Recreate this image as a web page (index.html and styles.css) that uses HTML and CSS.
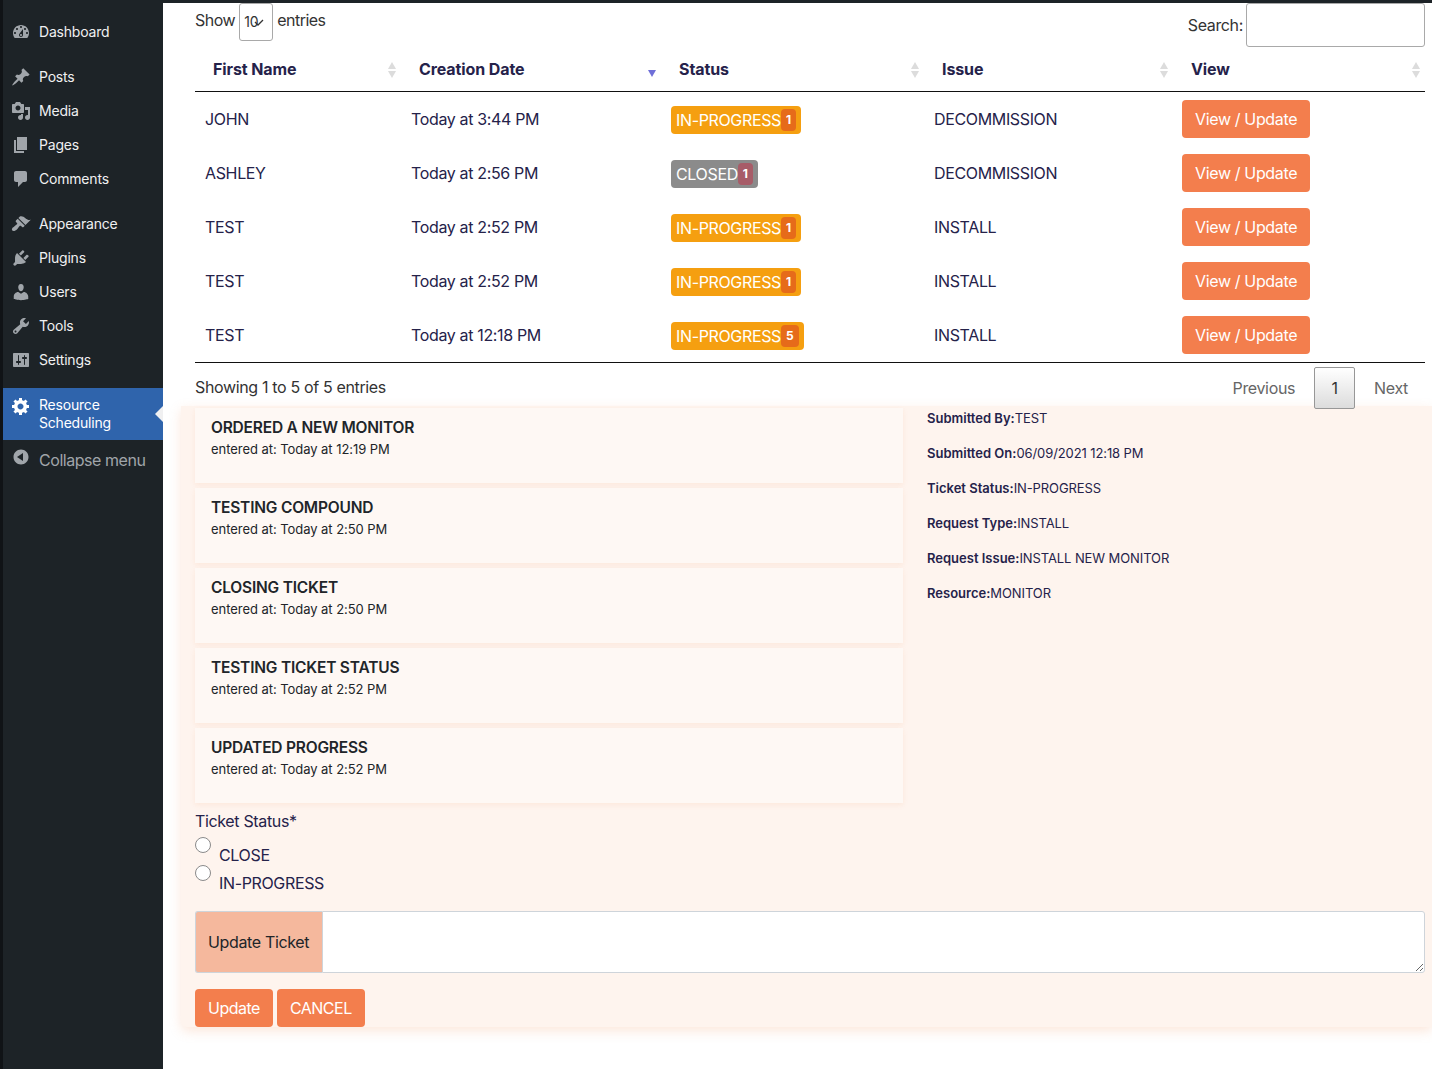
FILE: index.html
```html
<!DOCTYPE html>
<html>
<head>
    <title>Resource Scheduling</title>
    <link rel="stylesheet" href="styles.css">
</head>
<body>
    <aside class="sidebar">
        <ul class="menu">
            <li class="menu-item"><svg class="menu-icon" viewBox="0 0 20 20"><path fill-rule="evenodd" d="M3.76 16h12.48c1.1-1.37 1.76-3.11 1.76-5 0-4.42-3.58-8-8-8s-8 3.58-8 8c0 1.89.66 3.63 1.76 5zM10 4c.55 0 1 .45 1 1s-.45 1-1 1-1-.45-1-1 .45-1 1-1zM6 6c.55 0 1 .45 1 1s-.45 1-1 1-1-.45-1-1 .45-1 1-1zm8 0c.55 0 1 .45 1 1s-.45 1-1 1-1-.45-1-1 .45-1 1-1zm-5.37 5.55L12 7v6c0 1.1-.9 2-2 2s-2-.9-2-2c0-.57.24-1.08.63-1.45zM4 10c.55 0 1 .45 1 1s-.45 1-1 1-1-.45-1-1 .45-1 1-1zm12 0c.55 0 1 .45 1 1s-.45 1-1 1-1-.45-1-1 .45-1 1-1zm-5 3c0-.55-.45-1-1-1s-1 .45-1 1 .45 1 1 1 1-.45 1-1z"/></svg>Dashboard</li>
            <li class="menu-item menu-gap"><svg class="menu-icon" viewBox="0 0 20 20"><path d="M10.44 3.02l1.82-1.82 6.36 6.35-1.83 1.82c-1.05-.68-2.48-.57-3.41.36l-.75.75c-.92.93-1.04 2.35-.35 3.41l-1.83 1.82-2.41-2.41-2.8 2.79c-.42.42-3.38 2.71-3.8 2.29s1.86-3.39 2.28-3.81l2.79-2.79L4.1 9.36l1.83-1.82c1.05.69 2.48.57 3.4-.36l.75-.75c.93-.92 1.05-2.35.36-3.41z"/></svg>Posts</li>
            <li class="menu-item"><svg class="menu-icon" viewBox="0 0 20 20"><path fill-rule="evenodd" d="M13 11V4c0-.55-.45-1-1-1h-1.67L9 1H5L3.67 3H2c-.55 0-1 .45-1 1v7c0 .55.45 1 1 1h10c.55 0 1-.45 1-1zM7 4.5c1.38 0 2.5 1.12 2.5 2.5S8.38 9.5 7 9.5 4.5 8.38 4.5 7 5.62 4.5 7 4.5zM14 6h5v10.5c0 1.38-1.12 2.5-2.5 2.5S14 17.88 14 16.5s1.12-2.5 2.5-2.5c.17 0 .34.02.5.05V9h-3V6zm-4 8.05V13h2v3.5c0 1.38-1.12 2.5-2.5 2.5S7 17.88 7 16.5 8.12 14 9.5 14c.17 0 .34.02.5.05z"/></svg>Media</li>
            <li class="menu-item"><svg class="menu-icon" viewBox="0 0 20 20"><path d="M6 15V2h10v13H6zm-1 1h8v2H3V5h2v11z"/></svg>Pages</li>
            <li class="menu-item"><svg class="menu-icon" viewBox="0 0 20 20"><path d="M5 2h9c1.1 0 2 .9 2 2v7c0 1.1-.9 2-2 2h-2l-5 5v-5H5c-1.1 0-2-.9-2-2V4c0-1.1.9-2 2-2z"/></svg>Comments</li>
            <li class="menu-item menu-gap"><svg class="menu-icon" viewBox="0 0 20 20"><path d="M14.48 11.06L7.41 3.99l1.5-1.5c.5-.56 2.3-.47 3.51.32 1.21.8 1.43 1.28 2.91 2.1 1.18.64 2.45 1.26 4.45.85zm-.71.71L6.7 4.7 4.93 6.47c-.39.39-.39 1.02 0 1.41l1.06 1.06c.39.39.39 1.03 0 1.42-.6.6-1.43 1.11-2.21 1.69-.35.26-.7.53-1.01.84C1.43 13.23.28 15.5 1.39 16.61s3.38-.04 4.72-1.38c.31-.31.58-.66.84-1.01.58-.78 1.09-1.61 1.69-2.21.39-.39 1.03-.39 1.42 0l1.06 1.06c.39.39 1.02.39 1.41 0z"/></svg>Appearance</li>
            <li class="menu-item"><svg class="menu-icon" viewBox="0 0 20 20"><path d="M13.11 4.36L9.87 7.6 8 5.73l3.24-3.24c.35-.34 1.05-.2 1.56.32.52.51.66 1.21.31 1.55zm-8 1.77l.91-1.12 9.01 9.01-1.19.84c-.71.71-2.63 1.16-3.82 1.16H6.14L4.9 17.26c-.59.59-1.54.59-2.12 0-.59-.58-.59-1.53 0-2.12l1.24-1.24v-3.88c0-1.13.4-3.19 1.09-3.89zm7.26 3.97l3.24-3.24c.34-.35 1.04-.21 1.55.31.52.51.66 1.21.31 1.55l-3.24 3.25z"/></svg>Plugins</li>
            <li class="menu-item"><svg class="menu-icon" viewBox="0 0 20 20"><path d="M10 9.25c-2.27 0-2.73-3.44-2.73-3.44C7 4.02 7.82 2 9.97 2c2.16 0 2.98 2.02 2.71 3.81 0 0-.41 3.44-2.68 3.44zm0 2.57L12.72 10c2.39 0 4.52 2.33 4.52 4.53v2.49s-3.65 1.13-7.24 1.13c-3.65 0-7.24-1.13-7.24-1.13v-2.49c0-2.25 1.94-4.48 4.47-4.48z"/></svg>Users</li>
            <li class="menu-item"><svg class="menu-icon" viewBox="0 0 20 20"><path fill-rule="evenodd" d="M16.68 9.77c-1.34 1.34-3.3 1.67-4.95.99l-5.41 6.52c-.99.99-2.59.99-3.58 0s-.99-2.59 0-3.57l6.52-5.42c-.68-1.65-.35-3.61.99-4.95 1.28-1.28 3.12-1.62 4.72-1.06l-2.89 2.89 2.82 2.82 2.86-2.87c.53 1.58.18 3.39-1.08 4.65zM3.81 16.21c.4.39 1.04.39 1.43 0 .4-.4.4-1.04 0-1.43-.39-.4-1.03-.4-1.43 0-.39.39-.39 1.03 0 1.43z"/></svg>Tools</li>
            <li class="menu-item"><svg class="menu-icon" viewBox="0 0 20 20"><path fill-rule="evenodd" d="M18 16V4c0-.55-.45-1-1-1H3c-.55 0-1 .45-1 1v12c0 .55.45 1 1 1h14c.55 0 1-.45 1-1zM8 11h1c.55 0 1 .45 1 1s-.45 1-1 1H8v1.5c0 .28-.22.5-.5.5s-.5-.22-.5-.5V13H6c-.55 0-1-.45-1-1s.45-1 1-1h1V5.5c0-.28.22-.5.5-.5s.5.22.5.5V11zm5-2h-1c-.55 0-1-.45-1-1s.45-1 1-1h1V5.5c0-.28.22-.5.5-.5s.5.22.5.5V7h1c.55 0 1 .45 1 1s-.45 1-1 1h-1v5.5c0 .28-.22.5-.5.5s-.5-.22-.5-.5V9z"/></svg>Settings</li>
            <li class="menu-item menu-gap menu-active"><svg class="menu-icon" viewBox="0 0 20 20"><path fill-rule="evenodd" d="M18 12h-2.18c-.17.7-.44 1.35-.81 1.93l1.54 1.54-2.1 2.1-1.54-1.54c-.58.36-1.23.63-1.91.79V19H8v-2.18c-.68-.16-1.33-.43-1.91-.79l-1.54 1.54-2.12-2.12 1.54-1.54c-.36-.58-.63-1.23-.79-1.91H1V9.03h2.17c.16-.7.44-1.35.8-1.94L2.43 5.55l2.1-2.1 1.54 1.54c.58-.37 1.24-.64 1.93-.81V2h3v2.18c.68.16 1.33.43 1.91.79l1.54-1.54 2.12 2.12-1.54 1.54c.36.59.64 1.24.8 1.94H18V12zm-8.5 1.5c1.66 0 3-1.34 3-3s-1.34-3-3-3-3 1.34-3 3 1.34 3 3 3z"/></svg>Resource<br>Scheduling</li>
            <li class="menu-item menu-collapse"><svg class="menu-icon" viewBox="0 0 20 20"><path fill-rule="evenodd" d="M10 2.5c-4.14 0-7.5 3.36-7.5 7.5s3.36 7.5 7.5 7.5 7.5-3.36 7.5-7.5-3.36-7.5-7.5-7.5zM12 14L6 10l6-4z"/></svg>Collapse menu</li>
        </ul>
    </aside>

    <main class="content">
        <div class="listing">
            <div class="toolbar">
                <div class="length">
                    <span>Show</span>
                    <span class="length-select">10<svg class="length-arrow" viewBox="0 0 10 8"><path d="M1 3l3 3 5-5" fill="none" stroke="#333" stroke-width="1.3"/></svg></span>
                    <span>entries</span>
                </div>
                <label class="search">Search:<input class="search-input" type="text"></label>
            </div>

            <table class="tickets">
                <thead>
                    <tr>
                        <th class="col-name sortable">First Name</th>
                        <th class="col-date sorted">Creation Date</th>
                        <th class="col-status sortable">Status</th>
                        <th class="col-issue sortable">Issue</th>
                        <th class="col-view sortable">View</th>
                    </tr>
                </thead>
                <tbody>
                    <tr>
                        <td>JOHN</td>
                        <td>Today at 3:44 PM</td>
                        <td><span class="badge badge-progress">IN-PROGRESS<span class="count">1</span></span></td>
                        <td>DECOMMISSION</td>
                        <td class="cell-view"><a class="btn">View / Update</a></td>
                    </tr>
                    <tr>
                        <td>ASHLEY</td>
                        <td>Today at 2:56 PM</td>
                        <td><span class="badge badge-closed">CLOSED<span class="count">1</span></span></td>
                        <td>DECOMMISSION</td>
                        <td class="cell-view"><a class="btn">View / Update</a></td>
                    </tr>
                    <tr>
                        <td>TEST</td>
                        <td>Today at 2:52 PM</td>
                        <td><span class="badge badge-progress">IN-PROGRESS<span class="count">1</span></span></td>
                        <td>INSTALL</td>
                        <td class="cell-view"><a class="btn">View / Update</a></td>
                    </tr>
                    <tr>
                        <td>TEST</td>
                        <td>Today at 2:52 PM</td>
                        <td><span class="badge badge-progress">IN-PROGRESS<span class="count">1</span></span></td>
                        <td>INSTALL</td>
                        <td class="cell-view"><a class="btn">View / Update</a></td>
                    </tr>
                    <tr>
                        <td>TEST</td>
                        <td>Today at 12:18 PM</td>
                        <td><span class="badge badge-progress">IN-PROGRESS<span class="count">5</span></span></td>
                        <td>INSTALL</td>
                        <td class="cell-view"><a class="btn">View / Update</a></td>
                    </tr>
                </tbody>
            </table>

            <div class="table-footer">
                <span class="table-info">Showing 1 to 5 of 5 entries</span>
                <div class="pagination">
                    <span class="page-link">Previous</span>
                    <span class="page-current">1</span>
                    <span class="page-link">Next</span>
                </div>
            </div>
        </div>

        <section class="ticket-panel">
            <div class="ticket-columns">
                <div class="updates">
                    <div class="update-card">
                        <h4 class="update-title">ORDERED A NEW MONITOR</h4>
                        <p class="update-time">entered at: Today at 12:19 PM</p>
                    </div>
                    <div class="update-card">
                        <h4 class="update-title">TESTING COMPOUND</h4>
                        <p class="update-time">entered at: Today at 2:50 PM</p>
                    </div>
                    <div class="update-card">
                        <h4 class="update-title">CLOSING TICKET</h4>
                        <p class="update-time">entered at: Today at 2:50 PM</p>
                    </div>
                    <div class="update-card">
                        <h4 class="update-title">TESTING TICKET STATUS</h4>
                        <p class="update-time">entered at: Today at 2:52 PM</p>
                    </div>
                    <div class="update-card">
                        <h4 class="update-title">UPDATED PROGRESS</h4>
                        <p class="update-time">entered at: Today at 2:52 PM</p>
                    </div>
                </div>
                <div class="details">
                    <p><b>Submitted By:</b>TEST</p>
                    <p><b>Submitted On:</b>06/09/2021 12:18 PM</p>
                    <p><b>Ticket Status:</b>IN-PROGRESS</p>
                    <p><b>Request Type:</b>INSTALL</p>
                    <p><b>Request Issue:</b>INSTALL NEW MONITOR</p>
                    <p><b>Resource:</b>MONITOR</p>
                </div>
            </div>

            <form class="ticket-form">
                <div class="status-label">Ticket Status*</div>
                <label class="radio-row"><input class="radio" type="radio" name="status"><span class="radio-text">CLOSE</span></label>
                <label class="radio-row"><input class="radio" type="radio" name="status"><span class="radio-text">IN-PROGRESS</span></label>

                <div class="input-group">
                    <span class="input-addon">Update Ticket</span>
                    <textarea class="input-text"></textarea>
                </div>

                <div class="form-actions">
                    <a class="btn">Update</a>
                    <a class="btn">CANCEL</a>
                </div>
            </form>
        </section>
    </main>
</body>
</html>
```

FILE: styles.css
```css
html, body {
    height: 100%;
}
body {
    margin: 0;
    display: flex;
    overflow: hidden;
    background-color: #1d2327;
    color: #25224a;
    font-family: Inter, "Liberation Sans", sans-serif;
    font-size: 16px;
    line-height: 24px;
    letter-spacing: -0.35px;
}

/* sidebar */
.sidebar {
    flex: 0 0 160px;
    border-left: 3px solid #101316;
    background-color: #1d2327;
}
.menu {
    list-style: none;
    margin: 0;
    padding: 15px 0 0;
}
.menu-item {
    position: relative;
    height: 34px;
    padding-left: 36px;
    color: #f0f0f1;
    font-size: 14px;
    line-height: 34px;
    letter-spacing: -0.2px;
}
.menu-gap {
    margin-top: 11px;
}
.menu-icon {
    position: absolute;
    left: 8px;
    top: 7px;
    width: 20px;
    height: 20px;
    fill: #a0a5aa;
}
.menu-active {
    height: 52px;
    padding-top: 8px;
    box-sizing: border-box;
    background-color: #2f64ac;
    color: #fff;
    line-height: 18px;
}
.menu-active .menu-icon {
    top: 8px;
    fill: #fff;
}
.menu-active::after {
    content: "";
    position: absolute;
    right: 0;
    top: 18px;
    border: 8px solid transparent;
    border-right-color: #f0f0f1;
    border-left-width: 0;
}
.menu-collapse {
    height: 40px;
    color: #a0a5aa;
    font-size: 16px;
    line-height: 40px;
    letter-spacing: -0.45px;
}
.menu-collapse .menu-icon {
    top: 7px;
}

/* top listing */
.content {
    flex: 1;
    margin-top: 3px;
    min-width: 0;
    background-color: #fff;
}
.listing {
    padding: 0 7px 0 32px;
}
.toolbar {
    display: flex;
    justify-content: space-between;
    height: 44px;
    color: #333;
}
.length {
    display: flex;
    gap: 4px;
    height: 38px;
    letter-spacing: -0.5px;
    line-height: 34px;
}
.length-select {
    position: relative;
    width: 34px;
    height: 38px;
    box-sizing: border-box;
    border: 1px solid #a9a9a9;
    border-radius: 3px;
    padding-left: 4px;
    font-size: 14px;
    letter-spacing: 0;
    line-height: 36px;
}
.length-arrow {
    position: absolute;
    left: 14px;
    top: 15px;
    width: 10px;
    height: 8px;
}
.search {
    display: flex;
    align-items: center;
    gap: 3px;
}
.search-input {
    width: 179px;
    height: 44px;
    box-sizing: border-box;
    border: 1px solid #a9a9a9;
    border-radius: 3px;
    background-color: #fff;
}

/* table */
.tickets {
    width: 100%;
    table-layout: fixed;
    border-collapse: collapse;
    border-bottom: 1px solid #111;
}
.tickets th {
    position: relative;
    box-sizing: border-box;
    height: 44px;
    padding: 0 18px;
    border-bottom: 1px solid #111;
    font-weight: 700;
    letter-spacing: -0.1px;
    text-align: left;
}
.col-name { width: 206px; }
.col-date { width: 260px; }
.col-status { width: 263px; }
.col-issue { width: 249px; }
.tickets td {
    height: 54px;
    padding: 0 10px;
}
.tickets .cell-view {
    padding-left: 9px;
}
.sortable::before,
.sortable::after,
.sorted::after {
    content: "";
    position: absolute;
    right: 5px;
    border: 4.5px solid transparent;
}
.sortable::before {
    top: 15px;
    border-top-width: 0;
    border-bottom: 7px solid #dcdcdc;
}
.sortable::after {
    top: 24px;
    border-bottom-width: 0;
    border-top: 7px solid #dcdcdc;
}
.col-date.sorted::after {
    top: 23px;
    border-bottom-width: 0;
    border-top: 7px solid #6f6fd8;
}
.badge {
    display: flex;
    align-items: center;
    width: fit-content;
    height: 28px;
    margin-top: 2px;
    padding: 0 5px;
    border-radius: 4px;
    color: #fff;
}
.badge-progress {
    background-color: #f59f10;
}
.badge-closed {
    background-color: #8b8b8b;
}
.count {
    height: 22px;
    padding: 0 5px;
    border-radius: 4px;
    font-size: 12px;
    font-weight: 700;
    letter-spacing: 0;
    line-height: 22px;
    text-align: center;
}
.badge-progress .count {
    background-color: #e66b1a;
}
.badge-closed .count {
    background-color: #a75c68;
}
.btn {
    display: inline-block;
    height: 38px;
    box-sizing: border-box;
    padding: 0 13px;
    border-radius: 4px;
    background-color: #f37e4d;
    color: #fff;
    line-height: 38px;
    white-space: nowrap;
    vertical-align: middle;
}
.table-footer {
    display: flex;
    justify-content: space-between;
    height: 43px;
    color: #333;
}
.table-info {
    line-height: 49px;
}
.pagination {
    position: relative;
    display: flex;
    gap: 19px;
    padding: 4px 17px 0 0;
}
.page-link {
    color: #666;
    line-height: 42px;
}
.page-current {
    width: 41px;
    height: 42px;
    box-sizing: border-box;
    border: 1px solid #979797;
    border-radius: 2px;
    background: linear-gradient(#fff, #dcdcdc);
    line-height: 40px;
    text-align: center;
}

/* ticket panel */
.ticket-panel {
    margin-left: 18px;
    height: 621px;
    box-sizing: border-box;
    padding: 2px 7px 0 14px;
    border-radius: 0 0 0 6px;
    background-color: #fef4ee;
    box-shadow: 0 4px 12px rgba(244, 160, 110, 0.25);
}
.ticket-columns {
    display: flex;
    gap: 24px;
}
.updates {
    display: flex;
    flex-direction: column;
    gap: 5px;
    width: 708px;
}
.update-card {
    height: 75px;
    box-sizing: border-box;
    padding: 8px 16px 0;
    background-color: #fef8f4;
    box-shadow: 0 2px 5px rgba(244, 160, 110, 0.14);
}
.update-title {
    margin: 0;
    color: #212529;
    font-size: 15.5px;
    font-weight: 600;
    letter-spacing: -0.2px;
    line-height: 24px;
}
.update-time {
    margin: 0;
    color: #212529;
    font-size: 13px;
    letter-spacing: -0.05px;
    line-height: 19px;
}
.details {
    font-size: 13px;
    letter-spacing: -0.1px;
    line-height: 20px;
}
.details p {
    margin: 0 0 15px;
}
.details b {
    font-weight: 600;
    letter-spacing: 0;
}
.status-label {
    margin-top: 6px;
    margin-bottom: 4px;
}
.radio-row {
    display: flex;
    height: 28px;
    gap: 8px;
}
.radio {
    width: 16px;
    height: 16px;
    margin: 0;
    appearance: none;
    border: 1px solid #8a8a8a;
    border-radius: 50%;
    background-color: #fff;
}
.radio-text {
    padding-top: 6px;
}
.input-group {
    display: flex;
    height: 62px;
    margin-top: 18px;
}
.input-addon {
    width: 127px;
    box-sizing: border-box;
    padding-left: 12px;
    border: 1px solid #ced4da;
    border-right: 0;
    border-radius: 3px 0 0 3px;
    background-color: #f5b89d;
    color: #212529;
    line-height: 60px;
}
.input-text {
    flex: 1;
    box-sizing: border-box;
    border: 1px solid #ced4da;
    border-radius: 0 3px 3px 0;
    background-color: #fff;
}
.form-actions {
    display: flex;
    gap: 4px;
    margin-top: 16px;
}
.form-actions .btn {
    letter-spacing: -0.5px;
}
```
